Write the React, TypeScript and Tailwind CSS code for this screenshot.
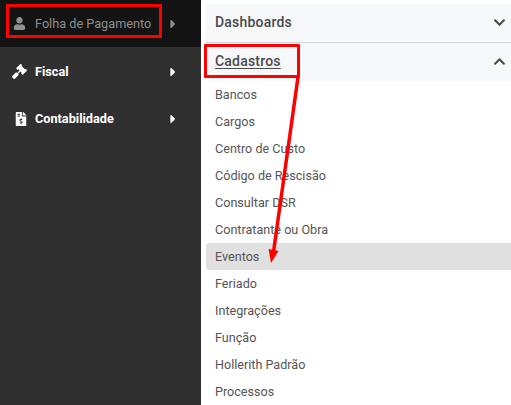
import React from "react";
import { FaUser, FaGavel, FaFileInvoiceDollar, FaCaretRight, FaChevronDown, FaChevronUp } from "react-icons/fa";

const items = [
  "Bancos",
  "Cargos",
  "Centro de Custo",
  "Código de Rescisão",
  "Consultar DSR",
  "Contratante ou Obra",
  "Eventos",
  "Feriado",
  "Integrações",
  "Função",
  "Hollerith Padrão",
  "Processos",
];

function SideItem({ icon, label, active }: { icon: React.ReactNode; label: string; active?: boolean }) {
  return (
    <div className={active ? "flex h-[47px] items-center bg-[#131313] pl-[13px] text-[#8f8f8f]" : "flex h-[47px] items-center pl-[12px] pt-[2px] text-white"}>
      <span className={active ? "flex w-[22px] justify-start" : "flex w-[23px] justify-start"}>{icon}</span>
      <span className={active ? "w-[131px] text-[12.7px] font-normal" : "w-[131px] text-[12.7px] font-bold"}>{label}</span>
      <FaCaretRight className="text-[14px]" />
    </div>
  );
}

export default function App() {
  return (
    <div className="relative flex h-[405px] w-[511px] overflow-hidden bg-white font-['Roboto',sans-serif]">
      <aside className="h-full w-[201px] shrink-0 bg-[#303030]">
        <SideItem active label="Folha de Pagamento" icon={<FaUser className="text-[13px]" />} />
        <SideItem label="Fiscal" icon={<FaGavel className="text-[15px]" />} />
        <SideItem label="Contabilidade" icon={<FaFileInvoiceDollar className="ml-[2px] text-[14px]" />} />
      </aside>

      <main className="flex-1 pl-[5px] pt-1 text-[#555]">
        <div className="flex h-[39px] items-center justify-between border-b border-[#d5d7da] bg-[#f7f8fa] pb-[2px] pl-[9px] pr-[5px] text-[#4a4a4a]">
          <span className="text-[14px] font-medium tracking-[0.2px]">Dashboards</span>
          <FaChevronDown className="text-[13px]" />
        </div>
        <div className="flex h-[38px] items-center justify-between bg-[#f7f8fa] pb-[2px] pl-[9px] pr-[5px] text-[#4a4a4a]">
          <span className="text-[14px] font-medium tracking-[0.2px] underline underline-offset-2">Cadastros</span>
          <FaChevronUp className="text-[13px]" />
        </div>
        <ul>
          {items.map((item) => (
            <li
              key={item}
              className={
                item === "Eventos"
                  ? "flex h-[27px] items-center rounded-l-[3px] bg-[#e0e0e0] pl-[9px] pt-[2px] text-[12.6px]"
                  : "flex h-[27px] items-center pl-[9px] pt-[2px] text-[12.6px]"
              }
            >
              {item}
            </li>
          ))}
        </ul>
      </main>

      {/* anotacoes em vermelho */}
      <div className="absolute left-[6px] top-[4px] h-[34px] w-[156px] rounded-[1px] border-[3px] border-[#f00]" />
      <div className="absolute left-[204px] top-[44px] h-[34px] w-[96px] rounded-[1px] border-[3px] border-[#f00]" />
      <svg className="absolute left-0 top-0" width="511" height="405" viewBox="0 0 511 405" fill="none">
        <line x1="298" y1="77" x2="273.5" y2="252" stroke="#f00" strokeWidth="3.5" />
        <polygon points="268.5,249 278.5,251 271,263" fill="#f00" />
      </svg>
    </div>
  );
}
